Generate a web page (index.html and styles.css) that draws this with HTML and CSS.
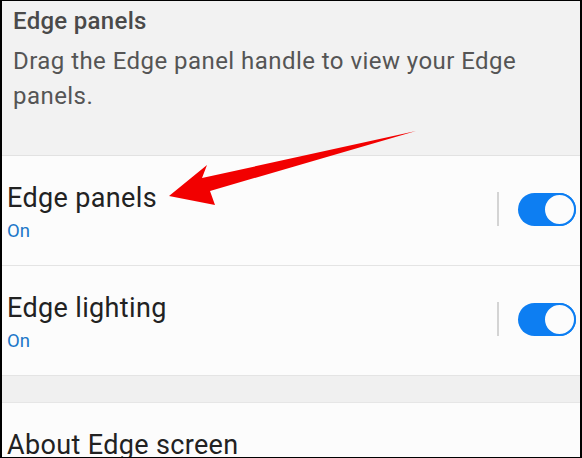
FILE: index.html
```html
<!DOCTYPE html>
<html>
<head>
<meta charset="utf-8">
<link rel="stylesheet" href="styles.css">
</head>
<body>
<div class="screen">
  <div class="header">
    <div class="header-title">Edge panels</div>
    <div class="header-desc">Drag the Edge panel handle to view your Edge panels.</div>
  </div>
  <div class="row">
    <div class="row-text">
      <div class="row-title">Edge panels</div>
      <div class="row-status">On</div>
    </div>
    <div class="controls">
      <div class="vline"></div>
      <div class="toggle"><div class="knob"></div></div>
    </div>
  </div>
  <div class="row">
    <div class="row-text">
      <div class="row-title">Edge lighting</div>
      <div class="row-status">On</div>
    </div>
    <div class="controls">
      <div class="vline"></div>
      <div class="toggle"><div class="knob"></div></div>
    </div>
  </div>
  <div class="band"></div>
  <div class="row last">
    <div class="row-text">
      <div class="row-title">About Edge screen</div>
    </div>
  </div>
  <svg class="arrow" width="582" height="458" viewBox="0 0 582 458">
    <polygon points="169,196 207,165 202,178 416,131 210,191 215,205" fill="#f20000"/>
  </svg>
</div>
</body>
</html>
```
FILE: styles.css
```css
* { box-sizing: border-box; }
html, body { margin: 0; padding: 0; background: #000; }
.screen {
  position: relative;
  width: 582px;
  height: 458px;
  overflow: hidden;
  border-top: 1px solid #000;
  border-bottom: 1px solid #000;
  border-left: 2px solid #000;
  border-right: 2px solid #000;
  background: #fcfcfc;
  font-family: Roboto, "Liberation Sans", sans-serif;
}
.header {
  background: #f2f2f2;
  height: 155px;
  padding: 5px 11px 0 11px;
  border-bottom: 1px solid #e2e2e2;
}
.header-title {
  font-size: 24px;
  font-weight: 500;
  letter-spacing: 0.3px;
  line-height: 30px;
  color: #4a4a4a;
}
.header-desc {
  margin-top: 8px;
  font-size: 24px;
  letter-spacing: 0.45px;
  line-height: 35px;
  color: #555;
  max-width: 545px;
}
.row {
  display: flex;
  align-items: center;
  justify-content: space-between;
  height: 110px;
  padding-left: 5px;
  padding-right: 4px;
  border-bottom: 1px solid #e4e4e4;
}
.row-text {
  align-self: flex-start;
  padding-top: 27px;
}
.row-title {
  font-size: 27px;
  letter-spacing: 0.35px;
  line-height: 30px;
  color: #222;
}
.row-status {
  margin-top: 7px;
  font-size: 18.5px;
  line-height: 22px;
  color: #1d78c9;
}
.controls {
  display: flex;
  align-items: center;
  margin-bottom: 3px;
}
.vline {
  width: 2px;
  height: 34px;
  background: #d4d4d4;
  margin-right: 19px;
}
.toggle {
  position: relative;
  width: 58px;
  height: 33px;
  border-radius: 17px;
  background: #0d7ef2;
}
.knob {
  position: absolute;
  right: 0;
  top: 0;
  width: 33px;
  height: 33px;
  border-radius: 50%;
  background: #fcfcfc;
  border: 2px solid #0d7ef2;
}
.band {
  height: 27px;
  background: #f0f0f0;
  border-bottom: 1px solid #e6e6e6;
}
.row.last {
  border-bottom: none;
}
.arrow {
  position: absolute;
  left: -2px;
  top: -1px;
  pointer-events: none;
}
```
